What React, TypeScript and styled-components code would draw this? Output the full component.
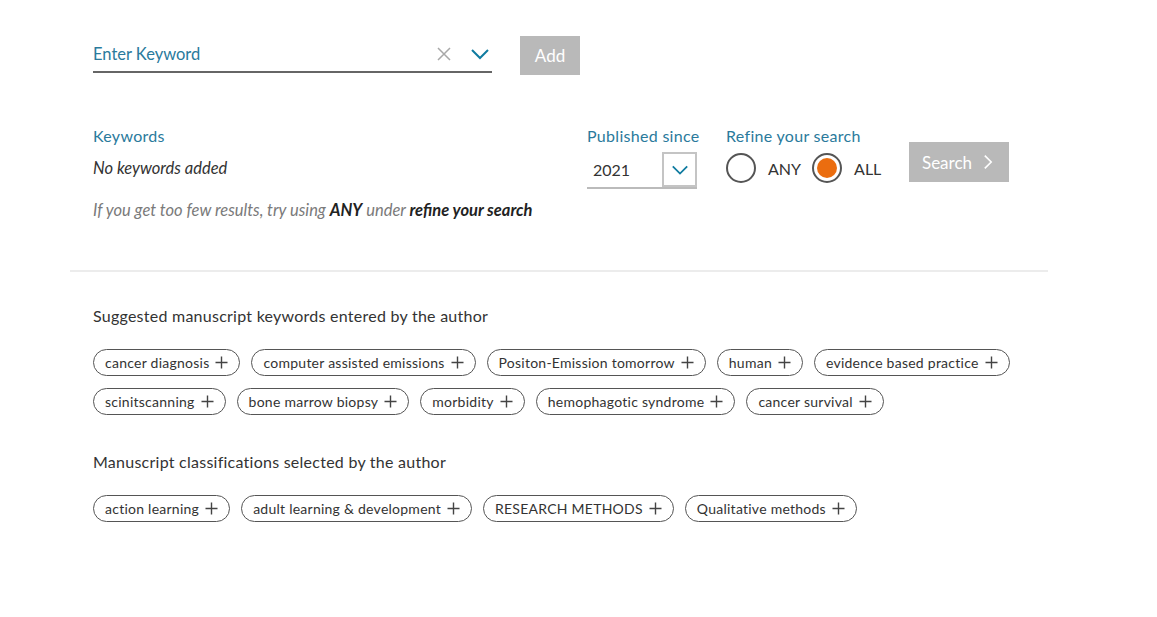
import React from "react";
import styled, { createGlobalStyle } from "styled-components";

const GlobalStyle = createGlobalStyle`
    body {
        margin: 0;
        background: #ffffff;
        font-family: "Lato", "Open Sans", sans-serif;
        color: #333333;
    }
`;

const keywords = [
    "cancer diagnosis",
    "computer assisted emissions",
    "Positon-Emission tomorrow",
    "human",
    "evidence based practice",
    "scinitscanning",
    "bone marrow biopsy",
    "morbidity",
    "hemophagotic syndrome",
    "cancer survival",
];

const classifications = [
    "action learning",
    "adult learning & development",
    "RESEARCH METHODS",
    "Qualitative methods",
];

const Chevron = ({ size = 18, color = "#0f7ba0", dir = "down" }: { size?: number; color?: string; dir?: "down" | "right" }) => (
    <svg width={size} height={size} viewBox="0 0 20 20" fill="none">
        {dir === "down" ? (
            <path d="M2 6 L10 14 L18 6" stroke={color} strokeWidth="2" />
        ) : (
            <path d="M6 2 L14 10 L6 18" stroke={color} strokeWidth="2" />
        )}
    </svg>
);

const Plus = () => (
    <svg width="13" height="13" viewBox="0 0 13 13">
        <path d="M6.5 0.5 V12.5 M0.5 6.5 H12.5" stroke="#444" strokeWidth="1.4" />
    </svg>
);

const Chip = ({ label }: { label: string }) => (
    <ChipButton>
        <span>{label}</span>
        <Plus />
    </ChipButton>
);

export default function App() {
    return (
        <>
            <GlobalStyle />
            <Page>
                <Inner>
                    <KeywordRow>
                        <KeywordField>
                            <Placeholder>Enter Keyword</Placeholder>
                            <FieldIcons>
                                <svg width="16" height="16" viewBox="0 0 16 16">
                                    <path d="M2 2 L14 14 M14 2 L2 14" stroke="#a8a8a8" strokeWidth="1.5" />
                                </svg>
                                <Chevron size={20} />
                            </FieldIcons>
                        </KeywordField>
                        <AddButton>Add</AddButton>
                    </KeywordRow>

                    <FilterRow>
                        <KeywordsCol>
                            <Label>Keywords</Label>
                            <Empty>No keywords added</Empty>
                            <Hint>
                                If you get too few results, try using <b>ANY</b> under <b>refine your search</b>
                            </Hint>
                        </KeywordsCol>
                        <PublishedCol>
                            <Label>Published since</Label>
                            <Select>
                                <SelectValue>2021</SelectValue>
                                <SelectToggle>
                                    <Chevron size={18} />
                                </SelectToggle>
                            </Select>
                        </PublishedCol>
                        <RefineCol>
                            <Label>Refine your search</Label>
                            <RadioGroup>
                                <RadioOption>
                                    <Radio />
                                    ANY
                                </RadioOption>
                                <RadioOption>
                                    <Radio $checked />
                                    ALL
                                </RadioOption>
                            </RadioGroup>
                        </RefineCol>
                        <SearchButton>
                            Search
                            <Chevron size={16} color="#ffffff" dir="right" />
                        </SearchButton>
                    </FilterRow>
                </Inner>

                <Divider />

                <Inner>
                    <Section>
                        <SectionTitle>Suggested manuscript keywords entered by the author</SectionTitle>
                        <ChipList>
                            {keywords.map((k) => (
                                <Chip key={k} label={k} />
                            ))}
                        </ChipList>
                    </Section>
                    <Section>
                        <SectionTitle>Manuscript classifications selected by the author</SectionTitle>
                        <ChipList>
                            {classifications.map((k) => (
                                <Chip key={k} label={k} />
                            ))}
                        </ChipList>
                    </Section>
                </Inner>
            </Page>
        </>
    );
}

const Page = styled.div`
    width: 978px;
    margin-left: 70px;
    padding-top: 36px;
`;

const Inner = styled.div`
    padding: 0 23px;
`;

const KeywordRow = styled.div`
    display: flex;
    align-items: flex-start;
    gap: 28px;
`;

const KeywordField = styled.div`
    width: 399px;
    height: 37px;
    box-sizing: border-box;
    border-bottom: 2px solid #666;
    display: flex;
    align-items: center;
    justify-content: space-between;
`;

const Placeholder = styled.span`
    font-size: 16.5px;
    color: #2a7a9c;
`;

const FieldIcons = styled.div`
    display: flex;
    align-items: center;
    gap: 18px;
    padding-right: 2px;
`;

const AddButton = styled.button`
    width: 60px;
    height: 39px;
    border: none;
    background: #b9b9b9;
    color: #ffffff;
    font-family: inherit;
    font-size: 17px;
    padding: 0;
`;

const FilterRow = styled.div`
    display: flex;
    align-items: flex-start;
    margin-top: 49px;
`;

const KeywordsCol = styled.div`
    width: 494px;
    display: flex;
    flex-direction: column;
`;

const Label = styled.div`
    font-size: 16px;
    line-height: 24px;
    letter-spacing: 0.3px;
    color: #2a7a9c;
`;

const Empty = styled.div`
    margin-top: 9px;
    font-size: 16.5px;
    line-height: 22px;
    font-style: italic;
    color: #333;
`;

const Hint = styled.div`
    margin-top: 20px;
    font-size: 16.5px;
    line-height: 22px;
    font-style: italic;
    color: #7a7a7a;

    b {
        color: #222;
        font-weight: 700;
    }
`;

const PublishedCol = styled.div`
    width: 139px;
`;

const Select = styled.div`
    width: 110px;
    margin-top: 4px;
    display: flex;
    align-items: center;
    justify-content: space-between;
    border-bottom: 2px solid #bbb;
`;

const SelectValue = styled.span`
    font-size: 16px;
    padding-left: 6px;
    color: #333;
`;

const SelectToggle = styled.div`
    width: 35px;
    height: 35px;
    box-sizing: border-box;
    border: 2px solid #c4c4c4;
    display: flex;
    align-items: center;
    justify-content: center;
`;

const RefineCol = styled.div`
    width: 183px;
`;

const RadioGroup = styled.div`
    display: flex;
    align-items: center;
    gap: 11px;
    margin-top: 5px;
`;

const RadioOption = styled.label`
    display: flex;
    align-items: center;
    gap: 12px;
    font-size: 16px;
    color: #333;
`;

const Radio = styled.span<{ $checked?: boolean }>`
    width: 30px;
    height: 30px;
    box-sizing: border-box;
    border-radius: 50%;
    border: 2px solid #555;
    display: flex;
    align-items: center;
    justify-content: center;

    &::after {
        content: "";
        display: ${(p) => (p.$checked ? "block" : "none")};
        width: 20px;
        height: 20px;
        border-radius: 50%;
        background: #eb6d0f;
    }
`;

const SearchButton = styled.button`
    margin-top: 18px;
    width: 100px;
    height: 40px;
    border: none;
    background: #b9b9b9;
    color: #ffffff;
    font-family: inherit;
    font-size: 17px;
    display: flex;
    align-items: center;
    justify-content: center;
    gap: 8px;
    padding: 0;
`;

const Divider = styled.hr`
    margin: 49px 0 0;
    border: none;
    border-top: 2px solid #ececec;
`;

const Section = styled.section`
    margin-top: 32px;

    & + & {
        margin-top: 35px;
    }
`;

const SectionTitle = styled.h3`
    margin: 0;
    font-size: 16px;
    font-weight: 400;
    line-height: 24px;
    letter-spacing: 0.25px;
    color: #333;
`;

const ChipList = styled.div`
    display: flex;
    flex-wrap: wrap;
    gap: 12px 11px;
    margin-top: 21px;
    max-width: 930px;
`;

const ChipButton = styled.button`
    display: inline-flex;
    align-items: center;
    gap: 6px;
    height: 27px;
    padding: 0 11px;
    box-sizing: border-box;
    border: 1px solid #555;
    border-radius: 14px;
    background: #fff;
    font-family: inherit;
    font-size: 14px;
    letter-spacing: 0.25px;
    color: #333;
`;
